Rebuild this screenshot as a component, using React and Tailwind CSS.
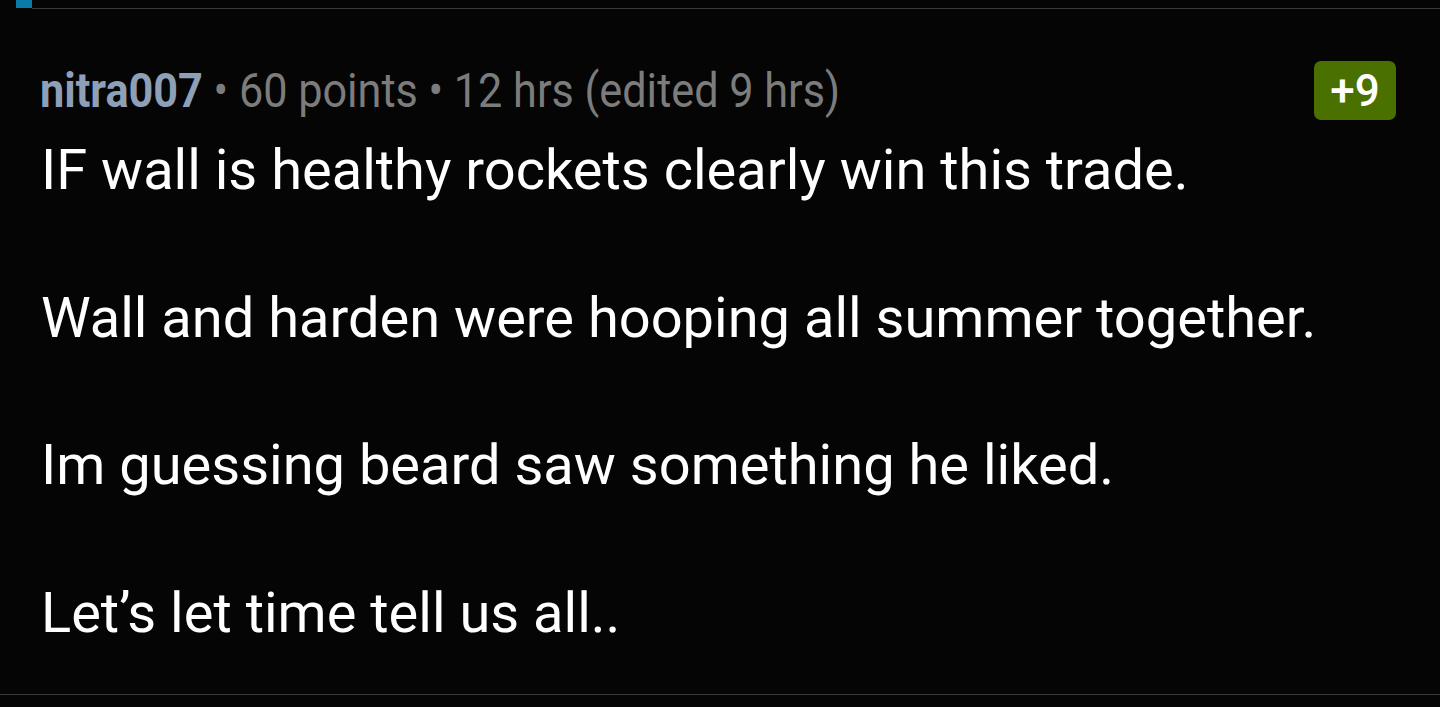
import React from 'react'

const lines = [
	'IF wall is healthy rockets clearly win this trade.',
	'Wall and harden were hooping all summer together.',
	'Im guessing beard saw something he liked.',
	'Let\u2019s let time tell us all..',
]

export default function App() {
	return (
		<div className="w-[1440px] h-[707px] bg-[#050505] overflow-hidden flex flex-col font-['Roboto',sans-serif]">
			{/* top rule */}
			<div className="flex h-[9px] shrink-0">
				<div className="w-[16px]" />
				<div className="w-[16px] h-[8px] bg-[#0a7aa6]" />
				<div className="flex-1 flex flex-col">
					<div className="h-[8px]" />
					<div className="h-[1px] bg-[#3a3a3a]" />
				</div>
			</div>

			<div className="flex-1 flex flex-col pl-[40px] pr-[44px] pt-[52px]">
				<div className="flex items-start justify-between">
					<div className="origin-left scale-x-[0.9] whitespace-nowrap text-[48px] leading-[60px] text-[#7c7c7c]">
						<span className="font-bold text-[#8ea0b8]">nitra007</span>
						<span> • 60 points • 12 hrs (edited 9 hrs)</span>
					</div>
					<div className="w-[82px] h-[59px] rounded-[7px] bg-[#4a7000] flex items-center justify-center text-white text-[44px] font-medium">
						+9
					</div>
				</div>

				<div className="mt-[13px] text-white text-[56px] leading-[73.5px] pl-[1px]">
					{lines.map((l, i) => (
						<div key={i}>
							{i > 0 && <div className="h-[74px]" />}
							<div>{l}</div>
						</div>
					))}
				</div>
			</div>

			<div className="h-[1px] bg-[#3a3a3a] shrink-0 mb-[12px]" />
		</div>
	)
}
